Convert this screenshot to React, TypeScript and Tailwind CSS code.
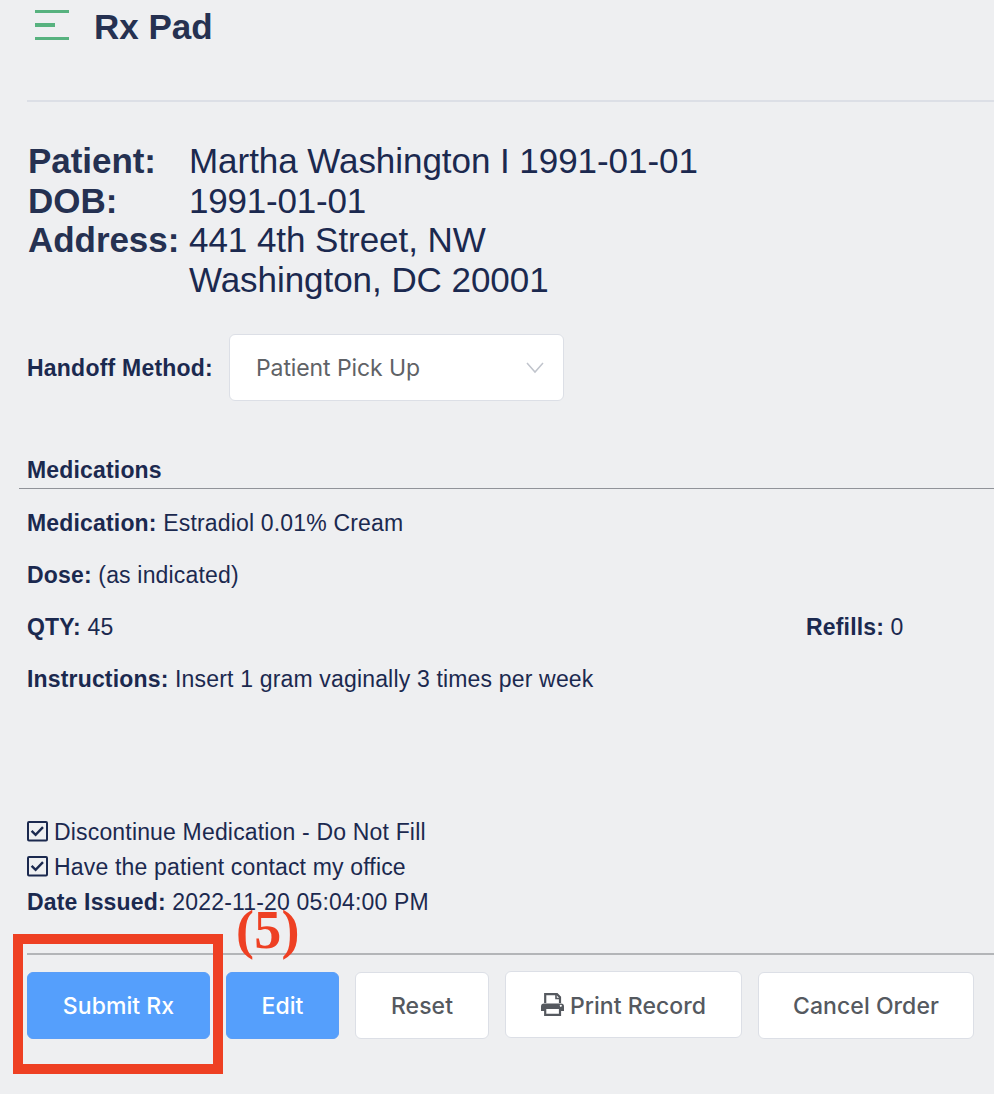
import type { ReactNode } from "react";

function Field({ label, children }: { label: string; children: ReactNode }) {
  return (
    <p className="h-[52px] whitespace-nowrap">
      <b>{label}</b> {children}
    </p>
  );
}

function CheckLine({ children }: { children: ReactNode }) {
  return (
    <div className="flex h-[35px] items-center whitespace-nowrap">
      <svg className="mr-[6px] -mt-px h-[21px] w-[21px]" viewBox="0 0 21 21" fill="none" stroke="#1b294f">
        <rect x="1" y="1" width="19" height="18.5" rx="1" strokeWidth="2" />
        <path d="M4.600 9.800l4 4 7.400-7.600" strokeWidth="2.400" />
      </svg>
      <span>{children}</span>
    </div>
  );
}

function Button({ className, children }: { className: string; children: ReactNode }) {
  return (
    <button
      className={
        "flex h-[67px] shrink-0 items-center justify-center whitespace-nowrap rounded-[6px] border font-['Inter',sans-serif] text-[23px] font-medium tracking-[0.05px] " +
        className
      }
    >
      {children}
    </button>
  );
}

export default function App() {
  return (
    <main className="relative h-[1094px] w-[994px] overflow-hidden bg-[#eeeff1] font-['Liberation_Sans',sans-serif] text-[23px] leading-[26px] tracking-[0.17px] text-[#1b294f]">
      <header className="ml-[27px] flex h-[102px] border-b-2 border-[#dcdfe6]">
        <svg className="ml-2 mt-[10px] h-[30px] w-[34px]" viewBox="0 0 34 30" fill="#57b27f">
          <rect width="34" height="3" />
          <rect y="13" width="20" height="4" />
          <rect y="27" width="34" height="3" />
        </svg>
        <h1 className="ml-[25px] mt-[7px] text-[35px] font-bold leading-[40px] tracking-normal text-[#253151]">Rx Pad</h1>
      </header>

      <section className="ml-[28px] mt-[39px] grid grid-cols-[161px_1fr] whitespace-nowrap text-[35px] leading-[39.6px] tracking-[-0.05px]">
        <b className="text-[#253151]">Patient:</b>
        <span>Martha Washington I 1991-01-01</span>
        <b className="text-[#253151]">DOB:</b>
        <span className="tracking-[-0.2px]">1991-01-01</span>
        <b className="text-[#253151]">Address:</b>
        <span>441 4th Street, NW</span>
        <span />
        <span>Washington, DC 20001</span>
      </section>

      <section className="ml-[27px] mt-[35px] flex h-[67px] items-center">
        <b className="w-[202px] whitespace-nowrap pt-px tracking-[0.22px]">Handoff Method:</b>
        <div className="flex h-[67px] w-[335px] items-center justify-between rounded-[6px] border border-[#dcdfe6] bg-white pl-[26px] pr-[19px] font-['Inter',sans-serif] tracking-[-0.1px] text-[#606266]">
          <span>Patient Pick Up</span>
          <svg className="h-[12px] w-[18px]" viewBox="0 0 18 12" fill="none" stroke="#c0c4cc" strokeWidth="1.5">
            <path d="M1 1l8 9 8-9" />
          </svg>
        </div>
      </section>

      <h2 className="ml-[19px] mt-[55px] h-[33px] border-b border-[#909399] pl-2 pt-px font-bold">Medications</h2>

      <section className="ml-[27px] mt-[21px] h-[308px]">
        <Field label="Medication:">Estradiol 0.01% Cream</Field>
        <Field label="Dose:">(as indicated)</Field>
        <div className="flex">
          <div className="w-[779px]">
            <Field label="QTY:">45</Field>
          </div>
          <Field label="Refills:">0</Field>
        </div>
        <Field label="Instructions:">Insert 1 gram vaginally 3 times per week</Field>
      </section>

      <section className="ml-[27px] mt-[-4px]">
        <CheckLine>Discontinue Medication - Do Not Fill</CheckLine>
        <CheckLine>Have the patient contact my office</CheckLine>
        <p className="flex h-[35px] items-center gap-[6.500px] whitespace-nowrap">
          <b>Date Issued:</b>
          <span>2022-11-20 05:04:00 PM</span>
        </p>
      </section>

      <footer className="ml-[27px] mt-[34px] flex border-t-2 border-[#b3b5b8] pt-[17px]">
        <Button className="w-[183px] border-[#5a9ef8] bg-[#559ffc] text-white">Submit Rx</Button>
        <Button className="ml-[16px] w-[113px] border-[#5a9ef8] bg-[#559ffc] text-white">Edit</Button>
        <Button className="ml-[16px] w-[134px] border-[#dcdfe6] bg-white text-[#55595f]">Reset</Button>
        <Button className="-mt-px ml-[16px] w-[237px] border-[#dcdfe6] bg-white pt-[2px] text-[#55595f]">
          <svg className="-mt-[2px] mr-[6px] h-[23px] w-[23px]" viewBox="0 0 23 23" fill="none" stroke="currentColor">
            <path d="M4.200 10V1.200H16l3 3V10" strokeWidth="2.200" />
            <path d="M15 1v4.500h4.500" strokeWidth="1.600" />
            <path
              d="M3 10.500h17a3 3 0 0 1 3 3v4.500h-4v-3H4v3H0v-4.500a3 3 0 0 1 3-3zM19.800 11.800a1 1 0 1 0 .01 0z"
              fill="currentColor"
              fillRule="evenodd"
              stroke="none"
            />
            <path d="M4.200 15h14.800v6.800H4.200z" strokeWidth="2.200" />
          </svg>
          Print Record
        </Button>
        <Button className="ml-[16px] w-[216px] border-[#dcdfe6] bg-white text-[#55595f]">Cancel Order</Button>
      </footer>

      <div className="absolute left-[13px] top-[934px] h-[140px] w-[210px] border-[10px] border-[#ee4023]" />
      <span className="absolute left-[236px] top-[899px] font-['Liberation_Serif',serif] text-[54px] font-bold leading-[62px] tracking-[0.3px] text-[#ee4023]">
        (5)
      </span>
    </main>
  );
}
